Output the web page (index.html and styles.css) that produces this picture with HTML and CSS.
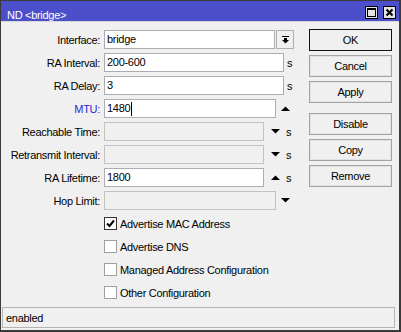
FILE: index.html
```html
<!DOCTYPE html>
<html lang="en">
<head>
  <meta charset="UTF-8" />
  <title>ND &lt;bridge&gt;</title>
  <link rel="stylesheet" href="styles.css">
</head>
<body>

  <div class="window">
    <div class="titlebar">
      <span class="title">ND &lt;bridge&gt;</span>
      <div class="tb-btns">
        <span class="tb-btn">
          <svg width="11" height="11" viewBox="0 0 11 11"><rect x="1.5" y="1.5" width="8" height="8" fill="none" stroke="#000" stroke-width="1"/><rect x="1" y="1" width="9" height="2" fill="#000"/></svg>
        </span>
        <span class="tb-btn">
          <svg width="11" height="11" viewBox="0 0 11 11"><path d="M2.5 2.5 L8.5 8.5 M8.5 2.5 L2.5 8.5" stroke="#000" stroke-width="2"/></svg>
        </span>
      </div>
    </div>

    <div class="body">
      <div class="form">
        <div class="row">
          <span class="label">Interface:</span>
          <span class="input w-dd">bridge</span>
          <span class="dd">
            <svg width="7" height="8" viewBox="0 0 7 8"><rect x="0" y="0" width="7" height="1" fill="#000"/><rect x="2" y="2" width="3" height="2" fill="#000"/><polygon points="0,4 7,4 3.5,7.5" fill="#000"/></svg>
          </span>
        </div>
        <div class="row">
          <span class="label">RA Interval:</span>
          <span class="input w-s">200-600</span>
          <span class="unit">s</span>
        </div>
        <div class="row">
          <span class="label">RA Delay:</span>
          <span class="input w-s">3</span>
          <span class="unit">s</span>
        </div>
        <div class="row">
          <span class="label label--blue">MTU:</span>
          <span class="input w-arrow">1480<i class="caret"></i></span>
          <svg class="arrow" width="9" height="5" viewBox="0 0 9 5"><polygon points="0,5 9,5 4.5,0.5" fill="#000"/></svg>
        </div>
        <div class="row">
          <span class="label">Reachable Time:</span>
          <span class="input input--off w-arrow-s"></span>
          <svg class="arrow arrow--near" width="9" height="5" viewBox="0 0 9 5"><polygon points="0,0 9,0 4.5,4.5" fill="#000"/></svg>
          <span class="unit unit--arrow">s</span>
        </div>
        <div class="row">
          <span class="label">Retransmit Interval:</span>
          <span class="input input--off w-arrow-s"></span>
          <svg class="arrow arrow--near" width="9" height="5" viewBox="0 0 9 5"><polygon points="0,0 9,0 4.5,4.5" fill="#000"/></svg>
          <span class="unit unit--arrow">s</span>
        </div>
        <div class="row">
          <span class="label">RA Lifetime:</span>
          <span class="input w-arrow-s">1800</span>
          <svg class="arrow arrow--near" width="9" height="5" viewBox="0 0 9 5"><polygon points="0,5 9,5 4.5,0.5" fill="#000"/></svg>
          <span class="unit unit--arrow">s</span>
        </div>
        <div class="row">
          <span class="label">Hop Limit:</span>
          <span class="input input--off w-arrow"></span>
          <svg class="arrow" width="9" height="5" viewBox="0 0 9 5"><polygon points="0,0 9,0 4.5,4.5" fill="#000"/></svg>
        </div>

        <div class="check">
          <span class="box box--on">
            <svg width="11" height="11" viewBox="0 0 11 11"><path d="M2 5.5 L4.5 8 L9 2.5" fill="none" stroke="#000" stroke-width="2"/></svg>
          </span>
          <span>Advertise MAC Address</span>
        </div>
        <div class="check">
          <span class="box"></span>
          <span>Advertise DNS</span>
        </div>
        <div class="check">
          <span class="box"></span>
          <span>Managed Address Configuration</span>
        </div>
        <div class="check">
          <span class="box"></span>
          <span>Other Configuration</span>
        </div>
      </div>

      <div class="buttons">
        <span class="btn btn--default">OK</span>
        <span class="btn">Cancel</span>
        <span class="btn">Apply</span>
        <span class="btn btn--gap">Disable</span>
        <span class="btn">Copy</span>
        <span class="btn">Remove</span>
      </div>
    </div>

    <div class="status">enabled</div>
  </div>

</body>
</html>
```

FILE: styles.css
```css
/* reset */
html, body { margin:0; padding:0; }
body {
  font-family: "Liberation Sans", Arial, sans-serif;
  font-size: 11px;
  letter-spacing: -0.3px;
  color: #000;
  background: #fff;
}

/* window frame */
.window {
  width: 401px;
  height: 332px;
  box-sizing: border-box;
  border: 1px solid #3a3a3a;
  border-right-width: 2px;
  border-bottom-width: 2px;
  background: #f0f0f0;
  display: flex;
  flex-direction: column;
}

.titlebar {
  height: 20px;
  background: #4b4fc9;
  color: #fff;
  display: flex;
  justify-content: space-between;
  align-items: flex-start;
  padding: 0 3px 0 6px;
  border-bottom: 1px solid #d8d8d8;
}
.title {
  line-height: 13px;
  padding-top: 8px;
}
.tb-btns {
  display: flex;
  gap: 5px;
  padding-top: 5px;
}
.tb-btn {
  width: 13px;
  height: 13px;
  box-sizing: border-box;
  border: 1px solid #000;
  background: #e4e4e4;
  display: flex;
}

/* main area */
.body {
  display: flex;
}
.form {
  width: 308px;
  padding-top: 8px;
}
.row {
  display: flex;
  align-items: center;
  height: 19px;
  margin-bottom: 4px;
}
.label {
  width: 103px;
  box-sizing: border-box;
  padding-right: 4px;
  text-align: right;
  white-space: nowrap;
}
.label--blue { color: #2a2ad6; }

.input {
  height: 19px;
  box-sizing: border-box;
  border: 1px solid #abadb3;
  background: #fff;
  padding: 0 2px;
  line-height: 17px;
  display: flex;
  align-items: center;
}
.input--off {
  background: #f0f0f0;
  border-color: #c2c2c2;
}
.w-dd { width: 171px; }
.w-s { width: 180px; }
.w-arrow { width: 172px; }
.w-arrow-s { width: 160px; }

.caret {
  width: 1px;
  height: 14px;
  margin-left: 1px;
  background: #000;
}

.dd {
  width: 18px;
  height: 19px;
  box-sizing: border-box;
  margin-left: 1px;
  border: 1px solid #abadb3;
  background: #f0f0f0;
  display: flex;
  align-items: center;
  justify-content: center;
}

.unit { margin-left: 3px; }
.unit--arrow { margin-left: 6px; }
.arrow { margin-left: 5px; }
.arrow--near { margin-left: 7px; }

/* checkboxes */
.check {
  display: flex;
  align-items: center;
  height: 19px;
  margin-bottom: 4px;
  padding-left: 103px;
}
.box {
  width: 13px;
  height: 13px;
  box-sizing: border-box;
  border: 1px solid #a0a0a0;
  background: #fff;
  margin-right: 3px;
  display: flex;
}
.box--on { border-color: #333; }

/* buttons */
.buttons {
  width: 83px;
  padding-top: 7px;
  display: flex;
  flex-direction: column;
  gap: 4px;
}
.btn {
  height: 22px;
  box-sizing: border-box;
  border: 1px solid #a3a3a3;
  box-shadow: inset 0 0 0 1px #e2e2e2;
  background: #f0f0f0;
  display: flex;
  align-items: center;
  justify-content: center;
}
.btn--default {
  border-color: #111;
  box-shadow: none;
}
.btn--gap { margin-top: 6px; }

/* status bar */
.status {
  margin: auto 4px 2px 1px;
  height: 21px;
  box-sizing: border-box;
  border: 1px solid #b4b4b4;
  padding-left: 3px;
  display: flex;
  align-items: center;
}
```
